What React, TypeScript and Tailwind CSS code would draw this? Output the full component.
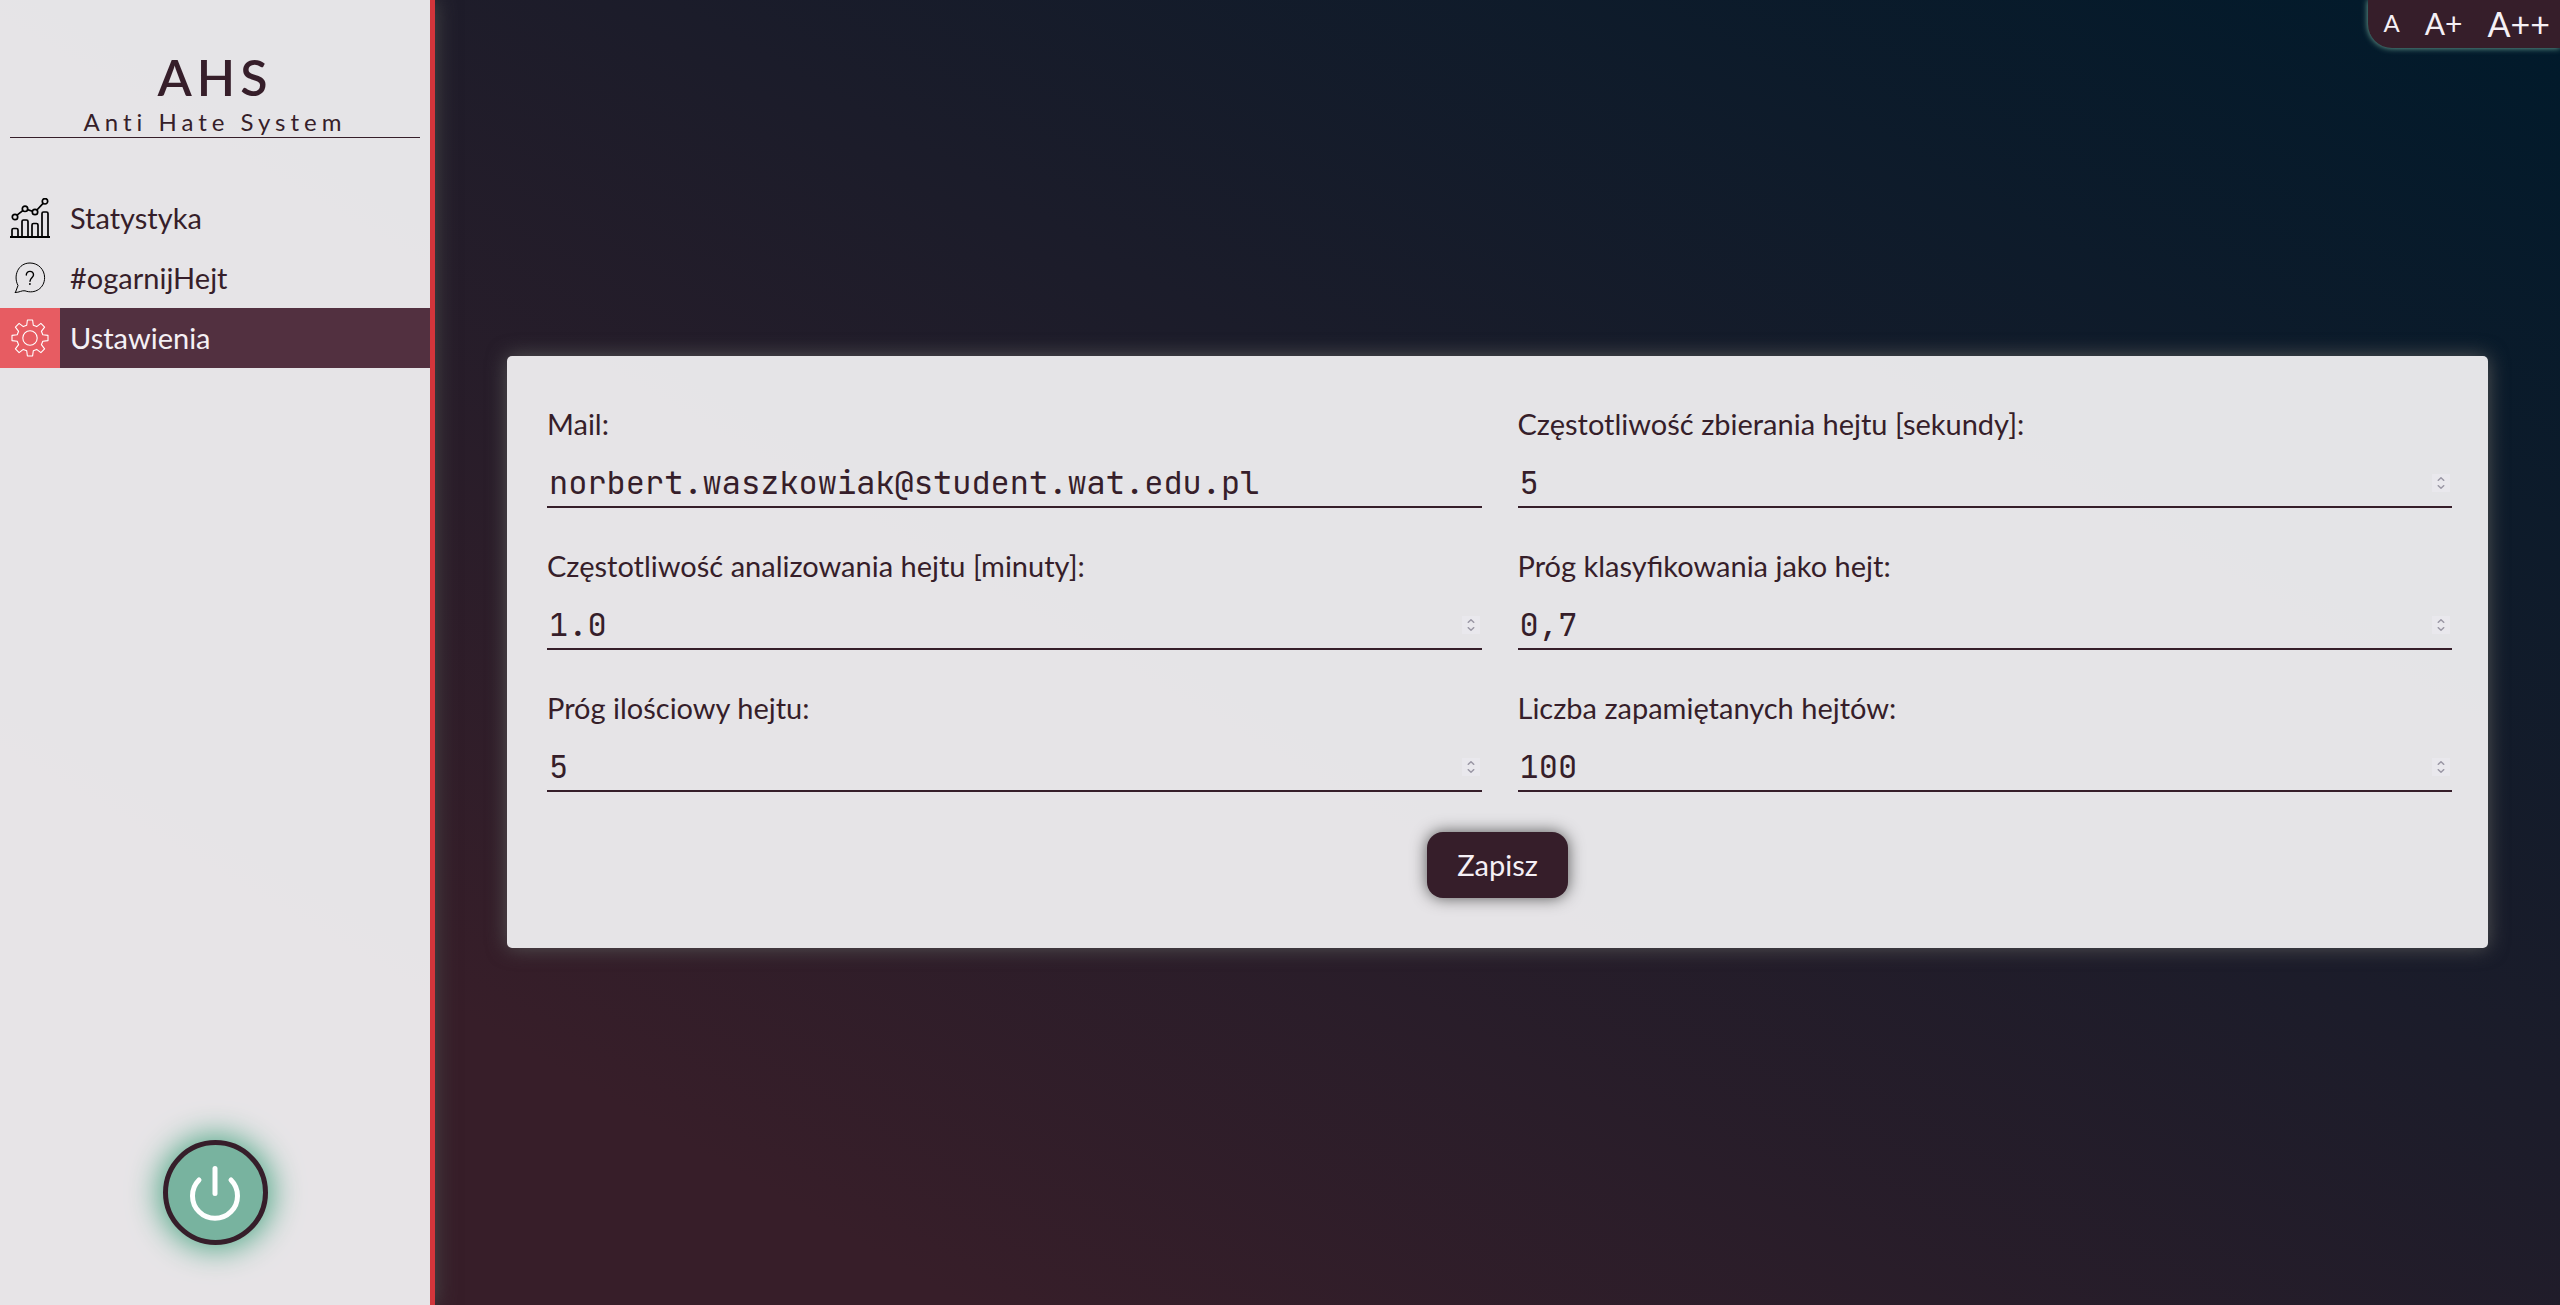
import { useState } from 'react';
import type { ReactNode } from 'react';

function StatsIcon() {
  return (
    <svg viewBox="0 0 40 40" className="size-10" fill="none" stroke="#000" strokeWidth="1.7" aria-hidden="true">
      <path d="M0 39H40" strokeWidth="2" />
      <path d="M2 38.500V32q0-1.500 1.500-1.500h3q1.500 0 1.500 1.500v6.500M12 38.500V23.500q0-1.500 1.500-1.500h3q1.500 0 1.500 1.500v15M22 38.500V27q0-1.500 1.500-1.500h3q1.500 0 1.500 1.500v11.500M32 38.500V15.500q0-1.500 1.500-1.500h3q1.500 0 1.500 1.500v23" />
      <circle cx="5" cy="19" r="2.700" />
      <circle cx="15" cy="10.800" r="2.700" />
      <circle cx="25" cy="14" r="2.700" />
      <circle cx="35" cy="3.300" r="2.700" />
      <path d="M7 17.200L12.800 12.600M17.600 11.600L22.400 13.200M26.900 12L33.100 5.300" />
    </svg>
  );
}

function QuestionIcon() {
  return (
    <svg viewBox="0 0 40 40" className="size-10" fill="none" stroke="#000" strokeLinecap="round" strokeLinejoin="round" aria-hidden="true">
      <path d="M5.400 34.500L8 27.500C3 18 8 5 20 5C28.300 5 34.600 11.600 34.600 19.700C34.600 30 25 36.500 15 32.800C12 32.200 9 34.600 5.400 34.500Z" />
      <path d="M16.300 17C16.300 12 23.800 12.400 23.500 17C23.300 19.600 20 20 20 23.300" strokeWidth="1.400" />
      <circle cx="19.900" cy="26" r="0.900" fill="#000" stroke="none" />
    </svg>
  );
}

function GearIcon() {
  return (
    <svg viewBox="0 0 40 40" className="size-10" fill="none" stroke="#fff" strokeWidth="1.100" strokeLinejoin="round" aria-hidden="true">
      <circle cx="20" cy="20" r="7.200" />
      <path d="M17.400 2H22.600L23.300 7.200L26.700 8.600L30.900 5.400L34.600 9.100L31.400 13.300L32.800 16.700L38 17.400V22.600L32.800 23.300L31.400 26.700L34.600 30.900L30.900 34.600L26.700 31.400L23.300 32.800L22.600 38H17.400L16.700 32.800L13.300 31.400L9.100 34.600L5.400 30.900L8.600 26.700L7.200 23.300L2 22.600V17.400L7.200 16.700L8.600 13.300L5.400 9.100L9.100 5.400L13.300 8.600L16.700 7.200Z" />
    </svg>
  );
}

function PowerIcon() {
  return (
    <svg viewBox="0 0 60 60" className="size-15" fill="none" stroke="#fff" strokeWidth="5" strokeLinecap="round" aria-hidden="true">
      <path d="M30 5.500V30.500" />
      <path d="M14 17A22.500 22.500 0 1 0 46 17" />
    </svg>
  );
}

function NavItem({ icon, label, active = false }: { icon: ReactNode; label: string; active?: boolean }) {
  return (
    <li>
      <a
        href="#"
        aria-current={active ? 'page' : undefined}
        className={active ? 'flex h-15 items-center bg-[#523040] text-[#f5f0f5]' : 'flex h-15 items-center'}
      >
        <span className={active ? 'flex size-15 items-center justify-center bg-[#e75c62]' : 'flex size-15 items-center justify-center'}>
          {icon}
        </span>
        <span className="pl-2.5 text-[29px]">{label}</span>
      </a>
    </li>
  );
}

function Spinner({ onStep }: { onStep: (delta: number) => void }) {
  return (
    <span className="flex h-[18px] w-[18px] flex-col items-center justify-center gap-1 bg-[#e9e8ed] text-[#9a97a5]">
      <button type="button" aria-label="Zwiększ" onClick={() => onStep(1)}>
        <svg viewBox="0 0 8 4" className="h-1 w-2" fill="none" stroke="currentColor" strokeWidth="1.500" aria-hidden="true">
          <path d="M0.800 3.700L4 0.800L7.200 3.700" />
        </svg>
      </button>
      <button type="button" aria-label="Zmniejsz" onClick={() => onStep(-1)}>
        <svg viewBox="0 0 8 4" className="h-1 w-2" fill="none" stroke="currentColor" strokeWidth="1.500" aria-hidden="true">
          <path d="M0.800 0.300L4 3.200L7.200 0.300" />
        </svg>
      </button>
    </span>
  );
}

type FieldData = { id: string; label: string; value: string; step?: number };

const fields: FieldData[] = [
  { id: 'mail', label: 'Mail:', value: 'norbert.waszkowiak@student.wat.edu.pl' },
  { id: 'collect', label: 'Częstotliwość zbierania hejtu [sekundy]:', value: '5', step: 1 },
  { id: 'analyse', label: 'Częstotliwość analizowania hejtu [minuty]:', value: '1.0', step: 0.5 },
  { id: 'threshold', label: 'Próg klasyfikowania jako hejt:', value: '0,7', step: 0.1 },
  { id: 'amount', label: 'Próg ilościowy hejtu:', value: '5', step: 1 },
  { id: 'remembered', label: 'Liczba zapamiętanych hejtów:', value: '100', step: 1 },
];

function Field({ id, label, value: initial, step }: FieldData) {
  const [value, setValue] = useState(initial);
  const change = (delta: number) => {
    const comma = value.includes(',');
    const digits = value.split(/[.,]/)[1]?.length ?? 0;
    const next = (parseFloat(value.replace(',', '.')) + delta * (step ?? 1)).toFixed(digits);
    setValue(comma ? next.replace('.', ',') : next);
  };
  return (
    <div className="flex flex-col gap-[18px]">
      <label htmlFor={id} className="text-[29px] leading-9">{label}</label>
      <div className="flex items-center border-b-2 border-[#361e2a] pr-0.5">
        <input
          id={id}
          type={step ? 'text' : 'email'}
          inputMode={step ? 'decimal' : 'email'}
          value={value}
          onChange={(e) => setValue(e.target.value)}
          className="h-[46px] min-w-0 flex-1 bg-transparent px-0.5 font-['JetBrains_Mono','DejaVu_Sans_Mono',monospace] text-[32px] outline-none"
        />
        {step ? <Spinner onStep={change} /> : null}
      </div>
    </div>
  );
}

export default function App() {
  return (
    <div className="flex min-h-screen bg-linear-[30deg,#371e29_20%,#001a2b_100%] font-[Lato,sans-serif] text-[#361e2a]">
      <aside className="flex w-[435px] shrink-0 flex-col border-r-5 border-[#d3353b] bg-[#f0eff1]/95 bg-clip-padding shadow-[0_0_20px_#4a4a4a]">
        <header className="mx-2.5 mt-[47px] border-b border-[#361e2a] text-center">
          <h1 className="text-[50px] leading-15 font-semibold tracking-widest">AHS</h1>
          <p className="text-[24px] leading-[30px] tracking-[5px]">Anti Hate System</p>
        </header>
        <nav className="mt-[50px]">
          <ul>
            <NavItem icon={<StatsIcon />} label="Statystyka" />
            <NavItem icon={<QuestionIcon />} label="#ogarnijHejt" />
            <NavItem icon={<GearIcon />} label="Ustawienia" active />
          </ul>
        </nav>
        <button
          type="button"
          aria-label="Włącz lub wyłącz"
          className="mx-auto mt-auto mb-15 flex size-[105px] items-center justify-center rounded-full border-5 border-[#361e2a] bg-[#78b39f] shadow-[0_0_30px_5px_#57ab8b]"
        >
          <PowerIcon />
        </button>
      </aside>

      <main className="relative flex flex-1 items-center px-18 pb-px">
        <div className="absolute top-0 right-0 flex h-12 items-center gap-[25px] rounded-bl-3xl bg-[#361e2a] pr-2.5 pb-0.5 pl-4 text-[#f5f0f5] shadow-[0_0_6px_#78b39f]">
          <button type="button" className="text-[24px]">A</button>
          <button type="button" className="text-[30px]">A+</button>
          <button type="button" className="text-[34px]">A++</button>
        </div>

        <form
          onSubmit={(e) => e.preventDefault()}
          className="flex w-full flex-col rounded-[5px] bg-[#f0eff1]/95 px-9 py-[50px] shadow-[0_0_20px_#555]"
        >
          <div className="ml-1 grid grid-cols-2 gap-x-9 gap-y-10">
            {fields.map((f) => (
              <Field key={f.id} {...f} />
            ))}
          </div>
          <button
            type="submit"
            className="mx-auto mt-10 rounded-2xl bg-[#361e2a] px-[30px] py-3 text-[29px] leading-[42px] text-[#f5f0f5] shadow-[0_0_16px_#555]"
          >
            Zapisz
          </button>
        </form>
      </main>
    </div>
  );
}
